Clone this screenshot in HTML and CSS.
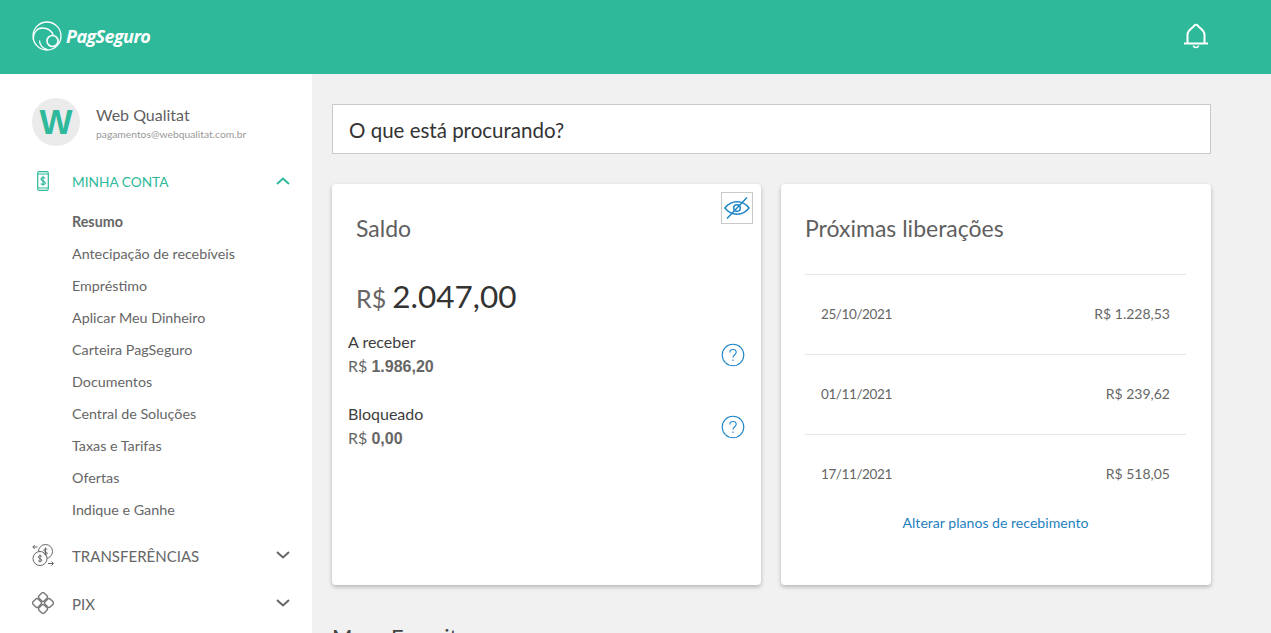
FILE: index.html
```html
<!DOCTYPE html>
<html lang="pt-BR">
<head>
<meta charset="utf-8">
<title>PagSeguro</title>
<link rel="stylesheet" href="styles.css">
</head>
<body>
<header class="topbar">
  <a class="logo">
    <svg class="logo-mark" viewBox="0 0 30 30" fill="none" stroke="#fff" stroke-width="1.300">
      <circle cx="15" cy="15" r="14"/>
      <path d="M1.500 19C1 11.500 5 7 10.500 7c5 0 9 2.500 11 7.500"/>
      <circle cx="20.500" cy="20" r="5.500" stroke-width="1.600"/>
      <path d="M15 28.500c-4-1-7.500-4.500-7.500-9"/>
    </svg>
    <span class="logo-text">PagSeguro</span>
  </a>
  <svg class="bell" viewBox="0 0 26 26" fill="none" stroke="#fff" stroke-width="2">
    <path d="M4.500 20V11.500C4.500 7.500 8.500 6 11 2.800 12 1.400 14 1.400 15 2.800 17.500 6 21.500 7.500 21.500 11.500V20"/>
    <path d="M1 20.500H25"/>
    <path d="M10.500 22.500a2.500 2 0 0 0 5 0" stroke-width="1.600"/>
  </svg>
</header>
<div class="layout">
  <aside class="sidebar">
    <div class="user">
      <div class="avatar">W</div>
      <div class="user-info">
        <div class="user-name">Web Qualitat</div>
        <div class="user-mail">pagamentos@webqualitat.com.br</div>
      </div>
    </div>
    <nav class="menu">
      <div class="menu-head is-open">
        <span class="menu-icon">
          <svg width="12" height="20" viewBox="0 0 12 20" fill="none" stroke="#2eb99b" stroke-width="1.200">
            <rect x=".7" y=".7" width="10.600" height="18.600" rx="1.500"/>
            <path d="M.7 3H11.300M.7 17H11.300"/>
            <path d="M8.300 7.300C7.800 6.300 4 5.900 4 8c0 2.300 4.300 1.500 4.300 4 0 2-3.800 1.700-4.500.6M6 4.800V14.700" stroke-width="1.200"/>
          </svg>
        </span>
        <span class="menu-label">MINHA CONTA</span>
        <svg class="chev" viewBox="0 0 14 8" fill="none" stroke="#2eb99b" stroke-width="2"><path d="M1 7L7 1.500 13 7"/></svg>
      </div>
      <ul class="submenu">
        <li class="active">Resumo</li>
        <li>Antecipação de recebíveis</li>
        <li>Empréstimo</li>
        <li>Aplicar Meu Dinheiro</li>
        <li>Carteira PagSeguro</li>
        <li>Documentos</li>
        <li>Central de Soluções</li>
        <li>Taxas e Tarifas</li>
        <li>Ofertas</li>
        <li>Indique e Ganhe</li>
      </ul>
      <div class="menu-head">
        <span class="menu-icon">
          <svg width="22" height="22" viewBox="0 0 22 22" fill="none" stroke="#666" stroke-width="1">
            <circle cx="13.500" cy="7.500" r="7"/>
            <circle cx="8" cy="14.500" r="7" fill="#fff"/>
            <path d="M15.300 5.500C14.500 4.500 11.800 4.600 11.800 6.200s3.500 1.300 3.500 3c0 1.500-2.800 1.500-3.600.5M13.500 3.500V11.500"/>
            <path d="M9.800 12.500C9 11.500 6.300 11.600 6.300 13.200s3.500 1.300 3.500 3c0 1.500-2.800 1.500-3.600.5M8 10.500V18.500"/>
            <path d="M5.500 3H.8M2.800 1L.8 3l2 2M16 19.500h5.500M19.500 17.500l2 2-2 2"/>
          </svg>
        </span>
        <span class="menu-label">TRANSFERÊNCIAS</span>
        <svg class="chev" viewBox="0 0 14 8" fill="none" stroke="#666" stroke-width="2"><path d="M1 1L7 6.500 13 1"/></svg>
      </div>
      <div class="menu-head">
        <span class="menu-icon">
          <svg width="22" height="22" viewBox="0 0 22 22" fill="none" stroke="#777" stroke-width="1.400">
            <rect x="7.400" y="1.400" width="7.200" height="7.200" rx="1.600" transform="rotate(45 11 5)"/>
            <rect x="7.400" y="13.400" width="7.200" height="7.200" rx="1.600" transform="rotate(45 11 17)"/>
            <rect x="1.400" y="7.400" width="7.200" height="7.200" rx="1.600" transform="rotate(45 5 11)"/>
            <rect x="13.400" y="7.400" width="7.200" height="7.200" rx="1.600" transform="rotate(45 17 11)"/>
          </svg>
        </span>
        <span class="menu-label">PIX</span>
        <svg class="chev" viewBox="0 0 14 8" fill="none" stroke="#666" stroke-width="2"><path d="M1 1L7 6.500 13 1"/></svg>
      </div>
    </nav>
  </aside>
  <main class="content">
    <div class="search">O que está procurando?</div>
    <div class="cards">
      <section class="card balance">
        <button class="eye" type="button" aria-label="Ocultar">
          <svg width="26" height="24" viewBox="0 0 26 24" fill="none" stroke="#1f86c7" stroke-width="1.500">
            <path d="M1 12C4 8 8 5.800 13 5.800S22 8 25 12c-3 4-7 6.200-12 6.200S4 16 1 12Z"/>
            <circle cx="13" cy="12" r="3.300"/>
            <path d="M23 1.500L3 22.500"/>
          </svg>
        </button>
        <h2 class="card-title">Saldo</h2>
        <div class="total"><span class="cur">R$</span> 2.047,00</div>
        <div class="stat">
          <div>
            <div class="stat-name">A receber</div>
            <div class="stat-val">R$ <b>1.986,20</b></div>
          </div>
          <svg class="help" viewBox="0 0 24 24" fill="none" stroke="#1f86c7" stroke-width="1.100">
            <circle cx="12" cy="12" r="10.800"/>
            <path d="M8.800 9.500C8.800 7.500 10.300 6.500 12 6.500s3.200 1 3.200 2.800c0 2.500-3.200 2.500-3.200 5.200"/>
            <path d="M12 16.500v1.500"/>
          </svg>
        </div>
        <div class="stat">
          <div>
            <div class="stat-name">Bloqueado</div>
            <div class="stat-val">R$ <b>0,00</b></div>
          </div>
          <svg class="help" viewBox="0 0 24 24" fill="none" stroke="#1f86c7" stroke-width="1.100">
            <circle cx="12" cy="12" r="10.800"/>
            <path d="M8.800 9.500C8.800 7.500 10.300 6.500 12 6.500s3.200 1 3.200 2.800c0 2.500-3.200 2.500-3.200 5.200"/>
            <path d="M12 16.500v1.500"/>
          </svg>
        </div>
      </section>
      <section class="card releases">
        <h2 class="card-title">Próximas liberações</h2>
        <div class="rows">
          <div class="row"><span class="row-date">25/10/2021</span><span>R$ 1.228,53</span></div>
          <div class="row"><span class="row-date">01/11/2021</span><span>R$ 239,62</span></div>
          <div class="row"><span class="row-date">17/11/2021</span><span>R$ 518,05</span></div>
        </div>
        <a class="plans">Alterar planos de recebimento</a>
      </section>
    </div>
    <div class="favorites">
      <h3 class="fav-title">Meus Favoritos</h3>
      <a class="fav-link">Personalizar</a>
    </div>
  </main>
</div>
</body>
</html>
```
FILE: styles.css
```css
* { box-sizing: border-box; }
html, body { height: 100%; }
body {
  margin: 0;
  height: 633px;
  overflow: hidden;
  background: #f1f1f1;
  font-family: Lato, "Open Sans", sans-serif;
  color: #5f5f5f;
}
.topbar {
  height: 74px;
  background: #2eb99b;
  display: flex;
  align-items: center;
  justify-content: space-between;
  padding: 0 62px 0 32px;
}
.logo { display: flex; align-items: center; gap: 4px; margin-top: -2px; }
.logo-mark { width: 30px; height: 30px; }
.logo-text {
  color: #fff;
  font: italic 700 18px/1 "Open Sans", sans-serif;
  letter-spacing: -0.6px;
}
.bell { width: 26px; height: 26px; margin-top: -2px; }
.layout { display: flex; height: 559px; }
.sidebar {
  width: 312px;
  flex: none;
  background: #fff;
  padding: 24px 0 0 32px;
}
.user { display: flex; align-items: center; gap: 16px; height: 48px; }
.avatar {
  width: 48px;
  height: 48px;
  border-radius: 50%;
  background: #ebebeb;
  color: #2eb99b;
  font: 700 35px/48px "Liberation Sans", sans-serif;
  text-align: center;
}
.user-name { font-size: 16px; line-height: 20px; margin-top: 3px; color: #5f5f5f; }
.user-mail { font-size: 10.300px; line-height: 16px; color: #999; margin-top: 1px; }
.menu { padding-right: 22px; }
.menu-head {
  height: 48px;
  display: flex;
  align-items: center;
  font-size: 15px;
  color: #666;
}
.menu-head.is-open { color: #2eb99b; margin-top: 11px; font-size: 13.700px; }
.menu-icon { width: 22px; margin-right: 18px; display: flex; justify-content: center; }
.menu-label { flex: 1; padding-top: 1px; }
.chev { width: 14px; height: 8px; }
.submenu {
  list-style: none;
  margin: 0 0 5px;
  padding: 0 0 0 40px;
  font-size: 14.300px;
  color: #666;
}
.submenu li { height: 32px; line-height: 32px; }
.submenu li:first-child { margin-top: 1px; }
.submenu .active { font-weight: 700; }
.content { flex: 1; padding: 30px 60px 0 20px; min-width: 0; }
.search {
  height: 50px;
  background: #fff;
  border: 1px solid #c9c9c9;
  padding: 0 16px;
  font-size: 20.500px;
  line-height: 50px;
  color: #333;
}
.cards { display: grid; grid-template-columns: 429px 430px; gap: 20px; margin-top: 30px; height: 401px; }
.card {
  position: relative;
  background: #fff;
  border-radius: 4px;
  box-shadow: 0 2px 4px rgba(0, 0, 0, .25);
}
.card-title {
  margin: 0;
  font-size: 23px;
  font-weight: 400;
  line-height: 28px;
  color: #5f5f5f;
}
.balance { padding: 30px 16px 0; }
.balance .card-title { padding-left: 8px; }
.eye {
  position: absolute;
  top: 8px;
  right: 8px;
  width: 32px;
  height: 32px;
  padding: 0;
  background: #fff;
  border: 1px solid #c9c9c9;
  display: flex;
  align-items: center;
  justify-content: center;
}
.total {
  margin: 32px 0 0 8px;
  font-size: 31.500px;
  line-height: 44px;
  word-spacing: -2px;
  color: #333;
}
.cur { font-size: 25px; color: #666; }
.stat {
  display: flex;
  align-items: center;
  justify-content: space-between;
  height: 48px;
  margin-top: 24px;
}
.total + .stat { margin-top: 10px; }
.stat-name { font-size: 16px; line-height: 24px; color: #3d3d3d; }
.stat-val { font-size: 16px; line-height: 24px; color: #666; }
.stat-val b { font-family: "Liberation Sans", sans-serif; }
.help { width: 24px; height: 24px; margin-top: 2px; }
.releases { padding: 30px 25px 0 24px; display: flex; flex-direction: column; }
.rows { margin-top: 32px; }
.row {
  height: 80px;
  border-top: 1px solid #e6e6e6;
  display: flex;
  align-items: center;
  justify-content: space-between;
  padding: 0 16px 2px;
  font-size: 14px;
  color: #666;
}
.row-date { font-size: 13.500px; letter-spacing: -.4px; }
.plans {
  display: block;
  margin-top: -1px;
  text-align: center;
  font-size: 14.100px;
  line-height: 20px;
  color: #1f7fbf;
}
.favorites {
  display: flex;
  justify-content: space-between;
  align-items: baseline;
  margin-top: 38px;
}
.fav-title { margin: 0; font-size: 22px; font-weight: 400; line-height: 28px; color: #444; }
.fav-link { font-size: 14.500px; color: #1f7fbf; }
```
